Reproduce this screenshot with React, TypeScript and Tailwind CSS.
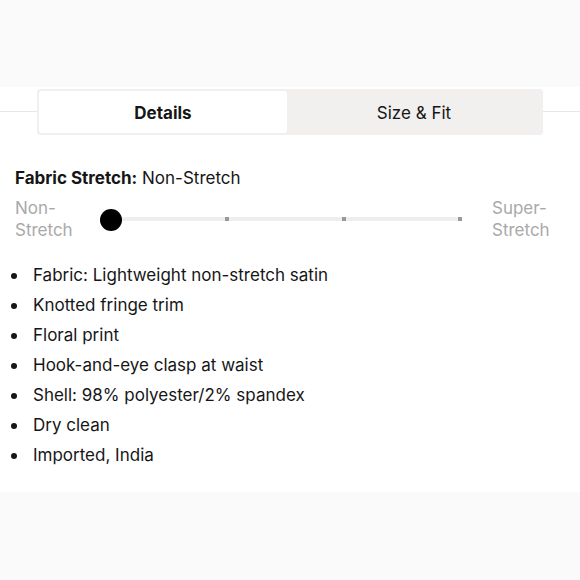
import React from "react";

const features = [
    "Fabric: Lightweight non-stretch satin",
    "Knotted fringe trim",
    "Floral print",
    "Hook-and-eye clasp at waist",
    "Shell: 98% polyester/2% spandex",
    "Dry clean",
    "Imported, India",
];

const StretchScale: React.FC = () => {
    return (
        <div className="flex items-center">
            <div className="w-[85px] text-[17px] leading-[22px] text-[#a9a9a9]">
                Non-
                <br />
                Stretch
            </div>
            <div className="relative mt-[2px] h-[22px] w-[364px]">
                <div className="absolute left-[11px] right-[2px] top-[8px] h-[4px] bg-[#eeeeee]" />
                <div className="absolute left-[125px] top-[8px] h-[4px] w-[4px] bg-[#999999]" />
                <div className="absolute left-[242px] top-[8px] h-[4px] w-[4px] bg-[#999999]" />
                <div className="absolute left-[358px] top-[8px] h-[4px] w-[4px] bg-[#999999]" />
                <div className="absolute left-0 top-0 h-[22px] w-[22px] rounded-full bg-black" />
            </div>
            <div className="ml-[28px] text-[17px] leading-[22px] text-[#a9a9a9]">
                Super-
                <br />
                Stretch
            </div>
        </div>
    );
};

export default function App() {
    return (
        <div
            className="flex h-[580px] w-[580px] flex-col bg-white text-[#161616]"
            style={{ fontFamily: "Inter, 'Noto Sans', sans-serif" }}
        >
            <div className="h-[87px] bg-[#fafafa]" />

            <div className="relative flex justify-center pt-[2px]">
                <div className="absolute left-0 right-0 top-[24px] h-px bg-[#e6e6e6]" />
                <div className="relative flex h-[46px] w-[506px] rounded-[3px] bg-[#f1f0ef] p-[2px]">
                    <div className="flex w-[248px] items-center justify-center rounded-[3px] bg-white pt-[4px] text-[17px] font-bold">
                        Details
                    </div>
                    <div className="flex flex-1 items-center justify-center pt-[4px] text-[17px]">
                        Size &amp; Fit
                    </div>
                </div>
            </div>

            <div className="px-[15px] pt-[32px]">
                <div className="text-[17px] leading-[22px]">
                    <span className="font-bold">Fabric Stretch:</span> Non-Stretch
                </div>
                <div className="mt-[8px]">
                    <StretchScale />
                </div>
                <ul className="mt-[20px] flex flex-col">
                    {features.map((item) => (
                        <li key={item} className="-ml-[4px] flex h-[30px] items-center text-[17px]">
                            <span className="mr-[16px] h-[6px] w-[6px] rounded-full bg-[#161616]" />
                            {item}
                        </li>
                    ))}
                </ul>
            </div>

            <div className="mt-auto h-[88px] bg-[#fafafa]" />
        </div>
    );
}
